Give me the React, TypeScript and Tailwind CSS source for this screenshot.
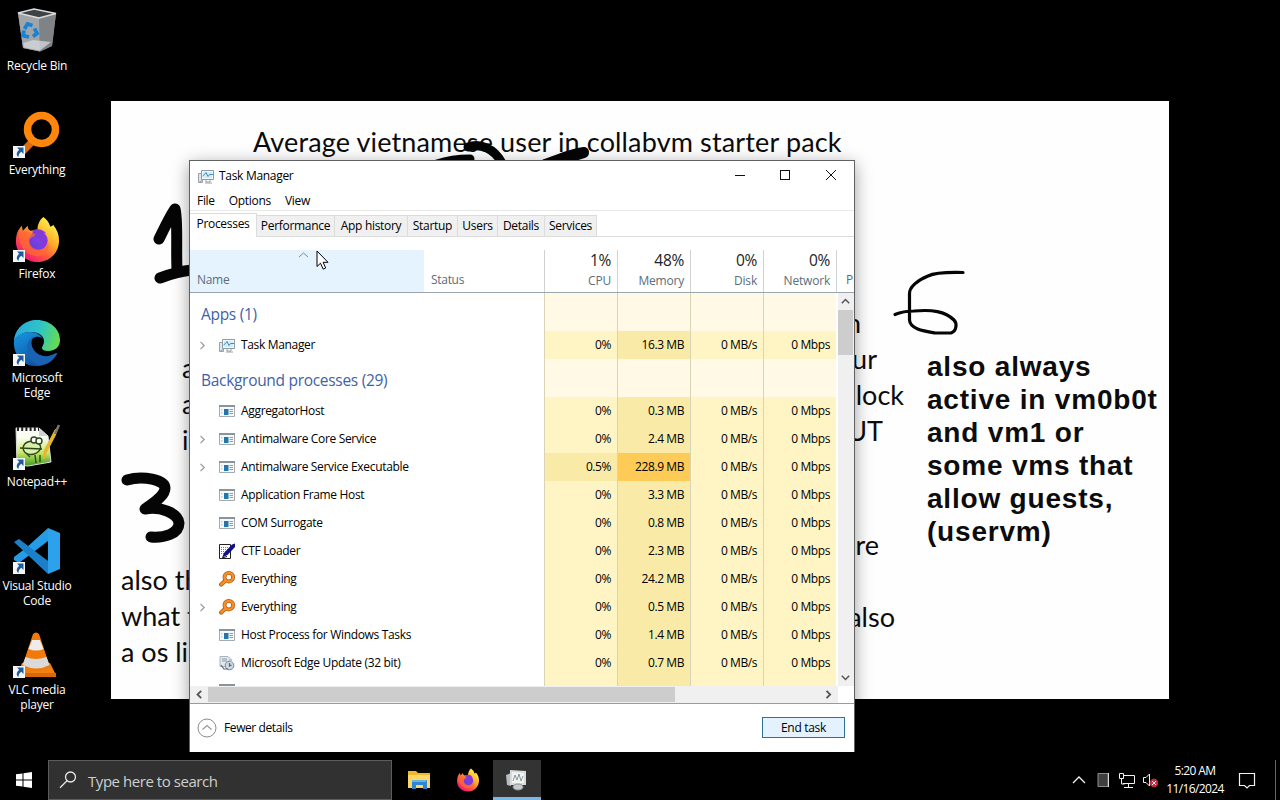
import React from "react";

type Kind = "tm" | "app" | "ctf" | "ev" | "upd";

const rows: { name: string; kind: Kind; exp?: boolean; cpu: string; mem: string }[] = [
  { name: "AggregatorHost", kind: "app", cpu: "0%", mem: "0.3 MB" },
  { name: "Antimalware Core Service", kind: "app", exp: true, cpu: "0%", mem: "2.4 MB" },
  { name: "Antimalware Service Executable", kind: "app", exp: true, cpu: "0.5%", mem: "228.9 MB" },
  { name: "Application Frame Host", kind: "app", cpu: "0%", mem: "3.3 MB" },
  { name: "COM Surrogate", kind: "app", cpu: "0%", mem: "0.8 MB" },
  { name: "CTF Loader", kind: "ctf", cpu: "0%", mem: "2.3 MB" },
  { name: "Everything", kind: "ev", cpu: "0%", mem: "24.2 MB" },
  { name: "Everything", kind: "ev", exp: true, cpu: "0%", mem: "0.5 MB" },
  { name: "Host Process for Windows Tasks", kind: "app", cpu: "0%", mem: "1.4 MB" },
  { name: "Microsoft Edge Update (32 bit)", kind: "upd", cpu: "0%", mem: "0.7 MB" },
];

function TaskIcon() {
  return (
    <svg width="16" height="16" viewBox="0 0 16 16" fill="none" className="shrink-0">
      <path d="M.5 5.500h4v9h-4z" fill="#dfe6ea" stroke="#9aa4aa" />
      <path d="M3.500 2.500h12v9h-12z" fill="#f2f8fb" stroke="#8f9ba2" />
      <path d="M5 4h9v6H5z" fill="#d5ecf7" />
      <path d="M4.500 8l2-1.500 1.500-2 2 4 1.500-2H15" stroke="#3b8fc4" />
      <path d="M8 12v2h4v-2M7 15h7" stroke="#98a2a8" />
      <path d="M1 14.500l3-2" stroke="#6fa7c8" />
    </svg>
  );
}

function RowIcon({ kind }: { kind: Kind }) {
  if (kind === "tm") return <TaskIcon />;
  if (kind === "app")
    return (
      <svg width="16" height="16" viewBox="0 0 16 16" className="shrink-0">
        <path d="M.5 2.500h15v11H.5z" fill="#f6f8f9" stroke="#a3abb0" />
        <path d="M0 2h16v2H0z" fill="#88959c" />
        <path d="M5 6h4.500v6H5z" fill="#1d78ae" />
        <path d="M10.500 6.500H14M10.500 8.500H14M10.500 10.500H14" stroke="#74a9c4" />
        <path d="M2 6h1.500v1.500H2zM2 9h1.500v1.500H2z" fill="#c8d3d8" />
      </svg>
    );
  if (kind === "ctf")
    return (
      <svg width="16" height="16" viewBox="0 0 16 16" className="shrink-0">
        <path d="M.5 1.500h11v14H.5z" fill="#fff" stroke="#222" />
        <path d="M2 4.500h8M2 6.500h7M2 8.500h5M2 10.500h4" stroke="#777" strokeDasharray="1 1" />
        <path d="M3 14.500L5 10 13 1.500l3-1v3.500L8.500 12z" fill="#10108a" />
        <path d="M3 15l5-1.500" stroke="#111" />
      </svg>
    );
  if (kind === "ev")
    return (
      <svg width="16" height="16" viewBox="0 0 16 16" fill="none" className="shrink-0">
        <path d="M6.200 9.800L2.200 13.500" stroke="#b85a10" strokeWidth="4.200" strokeLinecap="round" />
        <circle cx="9.800" cy="6.200" r="4.300" stroke="#b85a10" strokeWidth="3.800" />
        <path d="M6.200 9.800L2.200 13.500" stroke="#f5902a" strokeWidth="2.400" strokeLinecap="round" />
        <circle cx="9.800" cy="6.200" r="4.300" stroke="#f5902a" strokeWidth="2.400" />
      </svg>
    );
  return (
    <svg width="16" height="16" viewBox="0 0 16 16" fill="none" className="shrink-0">
      <path d="M1 1.500h8l2 2v8H1z" fill="#e3e9ee" stroke="#a9b4bd" />
      <path d="M3 4h5M3 6h5" stroke="#8797a5" />
      <circle cx="10.500" cy="10.500" r="4.300" fill="#cdd9e3" stroke="#71869a" />
      <path d="M10.500 8v3l2-1M2 10l3 4h4" stroke="#50677c" strokeWidth="1.200" />
      <path d="M9 5l4-1.500V7" fill="#b9c8d4" />
    </svg>
  );
}

function Chevron({ d, color = "#555", w = 1.5 }: { d: string; color?: string; w?: number }) {
  return (
    <svg width="9" height="9" viewBox="0 0 9 9" fill="none" className="shrink-0">
      <path d={d} stroke={color} strokeWidth={w} />
    </svg>
  );
}
const RIGHT = "M2.500 .8L6.200 4.500 2.500 8.200";
const LEFT = "M6.200 .8L2.500 4.500 6.200 8.200";
const UP = "M.8 6.200L4.500 2.500 8.200 6.200";
const DOWN = "M.8 2.800L4.500 6.500 8.200 2.800";

function FirefoxLogo({ size }: { size: number }) {
  const id = "ff" + size;
  return (
    <svg width={size} height={size} viewBox="0 0 48 48">
      <defs>
        <linearGradient id={id + "a"} x1="0.85" y1="0.1" x2="0.2" y2="0.95">
          <stop offset="0" stopColor="#fff44f" />
          <stop offset=".35" stopColor="#ffb02a" />
          <stop offset=".65" stopColor="#ff5a3a" />
          <stop offset="1" stopColor="#f0127c" />
        </linearGradient>
        <linearGradient id={id + "b"} x1="0" y1="1" x2="1" y2="0">
          <stop offset="0" stopColor="#5b3fd8" />
          <stop offset="1" stopColor="#a03ee8" />
        </linearGradient>
      </defs>
      <path
        d="M30 1c4 3 6 6 7 10 3-1 3-2 3-2 4 5 6 10 6 16 0 13-10 22-22 22S2 38 2 26c0-7 2-12 6-16l1 5 5-5c0 3 1 4 3 5l7-1c0-5 2-10 6-13z"
        fill={`url(#${id}a)`}
      />
      <circle cx="25" cy="25" r="9.500" fill={`url(#${id}b)`} />
      <path d="M19 15c5-3 11-1 14 3l-3-1c5 5 4 13-1 17 1-6-1-10-6-12l-4-3z" fill="#8239d8" />
      <path d="M5 18c4-4 9-3 12-1 1 1 3 1 5 1-1 3-3 3-4 4-2 1-3 2-3 5 0 5 5 8 10 8 5 0 9-3 10-8 2 7-3 14-11 14C14 41 5 33 5 18z" fill="#ff6a35" opacity=".7" />
    </svg>
  );
}

function RecycleBin() {
  return (
    <svg width="48" height="48" viewBox="0 0 48 48">
      <path d="M5 6L21 2l22 4.500L39 39 27 44.500 10 41z" fill="#8d9195" />
      <path d="M5 6l21 5 1 33.500L10 41z" fill="#a2a5a8" />
      <path d="M26 11l17-4.500L39 39l-12 5.500z" fill="#808386" />
      <path d="M5 6L21 2l22 4.500L26 11z" fill="#3f4144" stroke="#d9dcde" strokeWidth="1.300" />
      <path d="M10 36l10-3 18 2-11 8.500-16-3z" fill="#d5dadd" opacity=".75" />
      <g fill="none" stroke="#1683d8" strokeWidth="3.800">
        <path d="M11.500 22l3-5 5 1.500" />
        <path d="M21.500 21.500l2.500 5-4 3" />
        <path d="M16 30l-6-1.500 1-5" />
      </g>
    </svg>
  );
}

function EverythingLogo() {
  return (
    <svg width="48" height="48" viewBox="0 0 48 48" fill="none">
      <path d="M19 31L7 43" stroke="#e06a10" strokeWidth="7" />
      <circle cx="28.500" cy="18.500" r="14" stroke="#ff860d" strokeWidth="7.500" />
    </svg>
  );
}

function EdgeLogo() {
  return (
    <svg width="50" height="50" viewBox="0 0 48 48">
      <defs>
        <linearGradient id="e1" x1="0" y1="0.3" x2="1" y2="0.5">
          <stop offset="0" stopColor="#28a9dc" />
          <stop offset=".55" stopColor="#2fc5c6" />
          <stop offset="1" stopColor="#66dc50" />
        </linearGradient>
        <linearGradient id="e2" x1="0" y1="0" x2=".5" y2="1">
          <stop offset="0" stopColor="#1798e0" />
          <stop offset="1" stopColor="#1056a8" />
        </linearGradient>
      </defs>
      <path d="M1 22C2 9 12 1 24 1c13 0 23 9 23 20 0 7-5 11-12 11-4 0-6-1-6-3 0-2 2-3 2-7 0-5-5-9-13-9C9 13 4 17 1 22z" fill="url(#e1)" />
      <path d="M1 22c3-6 9-9 16-9 8 0 13 5 13 9-1-2-4-3-7-3-5 0-8 5-8 11 0 9 7 15 15 16-3 1-6 1-8 1C10 47 0 36 1 22z" fill="url(#e2)" />
      <path d="M14 30c0-6 2-10 6-12-2 4-2 9 1 13 5 7 14 8 22 3 1 0 1 .5 1 1-5 9-13 12-18 11-7-2-12-8-12-16z" fill="#1a63b4" />
      <path d="M20 19c2-1 5-2 8-.5 2 1 3 3 2 5-1 2-2 3-2 5 1 5 10 5 15 4-7 6-16 5-21-.5-3-3.500-4-9-2-13z" fill="#000" />
    </svg>
  );
}

function NotepadLogo() {
  return (
    <svg width="48" height="48" viewBox="0 0 48 48">
      <defs>
        <linearGradient id="n1" x1="0" y1="0" x2="0" y2="1">
          <stop offset=".25" stopColor="#fbfdf5" />
          <stop offset=".65" stopColor="#c8e865" />
          <stop offset="1" stopColor="#3f9a22" />
        </linearGradient>
      </defs>
      <path d="M3 5h23l9 8 3 26-23 4L4 42z" fill="url(#n1)" stroke="#ddd" />
      <path d="M26 5v8h9z" fill="#cfd3d0" />
      <path d="M4 6h22" stroke="#222" strokeWidth="4" strokeDasharray="2 2.200" />
      <g fill="#d9efab" stroke="#2b4a18" strokeWidth="1.400">
        <path d="M10 25c1-6 7-8 13-6 5 2 6 6 3 9-5 5-15 5-16-3z" />
        <circle cx="21" cy="17" r="3" fill="#fff" />
        <circle cx="26" cy="18" r="3" fill="#fff" />
        <path d="M7 25l22 1M13 30l4 4M22 32l1 8M27 32v7" fill="none" />
      </g>
      <path d="M45 4l-3 9-10 19-1 4v-8L42 7z" fill="#e7b52e" stroke="#e7b52e" />
      <path d="M46 2l-4 9" stroke="#777" strokeWidth="2.500" />
    </svg>
  );
}

function CodeLogo() {
  return (
    <svg width="50" height="50" viewBox="0 0 48 48">
      <path d="M35 1v13L6 36l-5-3v-3l12-9z" fill="#259ce5" />
      <path d="M1 15l5-3 29 22v13z" fill="#1b80c8" />
      <path d="M35 1l12 5v36l-12 5z" fill="#2ca2ed" />
    </svg>
  );
}

function VlcLogo() {
  return (
    <svg width="48" height="48" viewBox="0 0 48 48">
      <path d="M9 32h28l6 12q0 2-2 2H6q-2 0-2-2z" fill="#f08010" />
      <path d="M4 42h39v4H4z" fill="#d96808" />
      <path d="M20 3q3-3 6 0l11 33q-14 8-28 0z" fill="#f27a0c" />
      <path d="M19 9h8l3.500 9q-7 3-15 0z" fill="#ececec" />
      <path d="M12.500 26q10 4 21 0l3 8q-13 7-27 0z" fill="#dadada" />
    </svg>
  );
}

const shortcuts: { label: string; icon: React.ReactNode; link: boolean }[] = [
  { label: "Recycle Bin", icon: <RecycleBin />, link: false },
  { label: "Everything", icon: <EverythingLogo />, link: true },
  { label: "Firefox", icon: <FirefoxLogo size={47} />, link: true },
  { label: "Microsoft Edge", icon: <EdgeLogo />, link: true },
  { label: "Notepad++", icon: <NotepadLogo />, link: true },
  { label: "Visual Studio Code", icon: <CodeLogo />, link: true },
  { label: "VLC media player", icon: <VlcLogo />, link: true },
];

function Shortcut({ label, icon, link }: { label: string; icon: React.ReactNode; link: boolean }) {
  return (
    <div className="flex h-[104px] flex-col items-center pt-[7px]">
      <div className="relative flex h-12 w-12 items-center justify-center">
        {icon}
        {link && (
          <svg width="12" height="12" viewBox="0 0 12 12" className="absolute bottom-[1px] left-0">
            <path d="M0 0h12v12H0z" fill="#f4f6f8" />
            <path d="M4 1.500h6.500V8L8.300 5.800C6.500 7 5.600 8.500 5.500 11 2.800 9 3.500 6 6.200 3.700z" fill="#1f5b9c" />
          </svg>
        )}
      </div>
      <div className="mt-[3px] w-[74px] text-center text-[12px] leading-[15px] tracking-[-0.22px] text-white">{label}</div>
    </div>
  );
}

function Wallpaper() {
  return (
    <div className="absolute left-[111px] top-[101px] h-[598px] w-[1058px] overflow-hidden bg-[#fefefe] font-['Lato',sans-serif] text-[27px] leading-[36px] text-[#0c0c0c]">
      <div className="absolute left-[142px] top-[23px] whitespace-nowrap tracking-[0.14px]">Average vietnamese user in collabvm starter pack</div>
      <div className="absolute left-[71px] top-[249px]">a<br />a<br />is</div>
      <div className="absolute left-[10px] top-[461px] whitespace-nowrap">also the<br />what the<br />a os like</div>
      <div className="absolute right-[308px] top-[204px]">n</div>
      <div className="absolute right-[292px] top-[240px]">ur</div>
      <div className="absolute right-[265px] top-[276px]">block</div>
      <div className="absolute right-[286px] top-[312px]">BUT</div>
      <div className="absolute right-[290px] top-[426px]">re</div>
      <div className="absolute right-[274px] top-[498px]">also</div>
      <div className="absolute left-[816px] top-[249px] whitespace-nowrap font-['Liberation_Sans',sans-serif] text-[28px] font-bold leading-[33px] tracking-[0.8px]">
        also always<br />active in vm0b0t<br />and vm1 or<br />some vms that<br />allow guests,<br />(uservm)
      </div>
      <svg width="1058" height="598" viewBox="111 101 1058 598" fill="none" stroke="#050505" strokeLinecap="round" strokeLinejoin="round" className="absolute left-0 top-0">
        <path d="M159 239C163 231 170 216 175 209C178 220 176 246 177 270M160 278C168 275 180 271 192 270" strokeWidth="11" />
        <path d="M127 480C143 475 165 480 165 488C165 497 151 504 145 509C160 506 178 513 179 523C179 534 164 538 151 537" strokeWidth="11" />
        <path d="M468 147C480 143 494 148 502 163M437 164Q452 159 470 159" strokeWidth="9" />
        <path d="M545 164C560 159 569 154 584 152M562 160L584 153" strokeWidth="10" />
        <path d="M963 272.500C943 272 932 274 928 276C918 280 909 287 909.500 294V320C910 329 923 331 935 333H951C957 331 957 323 954 320C945 311 932 309.500 914 311C906 311 901 312 895 314.500" strokeWidth="3.200" />
      </svg>
    </div>
  );
}

function Cell({ children, tone }: { children?: React.ReactNode; tone: "head" | "low" | "mid" | "hot" }) {
  const bg = { head: "bg-[#fff9e5]", low: "bg-[#fff4c3]", mid: "bg-[#f9eba7]", hot: "bg-[#ffcb57]" }[tone];
  return (
    <div className={`flex w-[73px] shrink-0 items-center justify-end border-l border-[#d9d4b5] pr-[6px] text-[12px] tracking-[-0.42px] ${bg}`}>{children}</div>
  );
}

function Group({ title }: { title: string }) {
  return (
    <div className="flex h-[38px] shrink-0">
      <div className="w-[354px] shrink-0 pl-[11px] pt-[10px] text-[15.5px] leading-[22px] tracking-[-0.3px] text-[#435fa8]">{title}</div>
      <Cell tone="head" /><Cell tone="head" /><Cell tone="head" /><Cell tone="head" />
    </div>
  );
}

function Row({ name, kind, exp, cpu, mem }: { name: string; kind: Kind; exp?: boolean; cpu: string; mem: string }) {
  return (
    <div className="flex h-7 shrink-0">
      <div className="flex w-[354px] shrink-0 items-center pl-2">
        <div className="w-[21px]">{exp && <Chevron d={RIGHT} color="#999" w={1.2} />}</div>
        <RowIcon kind={kind} />
        <span className="ml-[6px] whitespace-nowrap text-[12px] tracking-[-0.33px]">{name}</span>
      </div>
      <Cell tone={cpu === "0%" ? "low" : "mid"}>{cpu}</Cell>
      <Cell tone={mem === "228.9 MB" ? "hot" : "mid"}>{mem}</Cell>
      <Cell tone="low">0 MB/s</Cell>
      <Cell tone="low">0 Mbps</Cell>
    </div>
  );
}

function HeadCell({ top, label }: { top: string; label: string }) {
  return (
    <div className="flex w-[73px] shrink-0 flex-col items-end border-l border-[#cfd3d6] pr-[6px]">
      <span className="mt-[-1px] text-[15.5px] leading-[22px] tracking-[-0.3px] text-[#222]">{top}</span>
      <span className="text-[12px] leading-[19px] tracking-[-0.2px] text-[#5c6d7c]">{label}</span>
    </div>
  );
}

function Tab({ children, className }: { children: string; className: string }) {
  return (
    <div className={`h-[21px] shrink-0 whitespace-nowrap border-r border-t border-[#dcdcdc] bg-[#f0f0f0] text-center leading-[20px] ${className}`}>{children}</div>
  );
}

function TaskManager() {
  return (
    <div className="absolute left-[189px] top-[160px] flex h-[592px] w-[666px] flex-col border border-b-0 border-[#5f6163] bg-white text-[12px] tracking-[-0.3px] text-black shadow-[0_4px_16px_rgba(0,0,0,0.38)]">
      <div className="flex h-[29px] shrink-0 items-center pl-2">
        <TaskIcon />
        <span className="ml-[5px] flex-1">Task Manager</span>
        <svg width="104" height="12" viewBox="0 0 104 12" fill="none" stroke="#111" className="mb-[2px] mr-[16px]" shapeRendering="crispEdges">
          <path d="M1 6.500h10M46.500 1.500h9v9h-9z" />
          <path d="M92 1l10 10M102 1L92 11" shapeRendering="auto" />
        </svg>
      </div>
      <div className="flex h-[21px] shrink-0 items-center gap-[14px] border-b border-[#e8e8e8] pl-[7px] pt-[2px]">
        <span>File</span>
        <span>Options</span>
        <span>View</span>
      </div>
      <div className="flex h-[26px] shrink-0 items-end border-b border-[#dcdcdc]">
        <div className="z-10 mb-[-1px] h-[24px] w-[67px] shrink-0 border-r border-t border-[#dcdcdc] bg-white text-center leading-[20px]">Processes</div>
        <Tab className="w-[78px]">Performance</Tab>
        <Tab className="w-[73px]">App history</Tab>
        <Tab className="w-[50px]">Startup</Tab>
        <Tab className="w-[40px]">Users</Tab>
        <Tab className="w-[47px]">Details</Tab>
        <Tab className="w-[52px]">Services</Tab>
      </div>
      <div className="mt-[13px] flex h-[43px] shrink-0 overflow-hidden border-b border-[#9aa5ae]">
        <div className="relative flex w-[234px] shrink-0 items-end bg-[#e4f3fe] pb-[3px] pl-[7px] text-[#5c6d7c]">
          Name
          <svg width="11" height="6" viewBox="0 0 11 6" fill="none" className="absolute left-[108px] top-[2px]">
            <path d="M1 5l4.500-4L10 5" stroke="#7b8994" />
          </svg>
        </div>
        <div className="flex w-[120px] shrink-0 items-end pb-[3px] pl-[7px] text-[#5c6d7c]">Status</div>
        <HeadCell top="1%" label="CPU" />
        <HeadCell top="48%" label="Memory" />
        <HeadCell top="0%" label="Disk" />
        <HeadCell top="0%" label="Network" />
        <div className="flex flex-1 items-end overflow-hidden border-l border-[#cfd3d6] pb-[3px] pl-[9px] text-[#5c6d7c]">P</div>
      </div>
      <div className="flex h-[393px] shrink-0">
        <div className="flex w-[646px] shrink-0 flex-col overflow-hidden">
          <Group title="Apps (1)" />
          <Row name="Task Manager" kind="tm" exp cpu="0%" mem="16.3 MB" />
          <Group title="Background processes (29)" />
          {rows.map((r, i) => (
            <Row key={i} {...r} />
          ))}
          <div className="flex h-[9px] shrink-0">
            <div className="w-[354px] shrink-0 pl-[29px] pt-[7px]">
              <div className="h-[2px] w-4 bg-[#88959c]" />
            </div>
            <Cell tone="low" /><Cell tone="mid" /><Cell tone="low" /><Cell tone="low" />
          </div>
        </div>
        <div className="ml-[2px] flex flex-1 flex-col items-center bg-[#f0f0f0] pr-px">
          <div className="flex h-[17px] items-center"><Chevron d={UP} /></div>
          <div className="h-[45px] w-full bg-[#cdcdcd]" />
          <div className="mt-auto flex h-[17px] items-center"><Chevron d={DOWN} /></div>
        </div>
      </div>
      <div className="flex h-[18px] shrink-0 border-b border-[#9b9b9b]">
        <div className="flex w-[648px] items-center bg-[#f0f0f0]">
          <div className="flex w-[18px] justify-center"><Chevron d={LEFT} w={1.8} /></div>
          <div className="h-[15px] w-[467px] bg-[#cdcdcd]" />
          <div className="ml-auto mr-[5px]"><Chevron d={RIGHT} w={1.8} /></div>
        </div>
      </div>
      <div className="flex flex-1 items-center pb-px pl-[7px] pr-[9px]">
        <svg width="20" height="20" viewBox="0 0 20 20" fill="none" stroke="#8b8b8b">
          <circle cx="10" cy="10" r="9" />
          <path d="M5.500 11.500L10 7.500l4.500 4" stroke="#9a9a9a" strokeWidth="1.300" />
        </svg>
        <span className="ml-[7px] tracking-[-0.4px]">Fewer details</span>
        <button className="mb-px ml-auto h-[21px] w-[83px] border border-[#2f7195] bg-[#e3f2fd] leading-[19px]">End task</button>
      </div>
    </div>
  );
}

function Taskbar() {
  return (
    <div className="absolute bottom-0 left-0 flex h-10 w-full items-center bg-black text-white">
      <div className="flex w-12 justify-center">
        <svg width="16" height="16" viewBox="0 0 16 16" fill="#fff">
          <path d="M0 2.300L6.500 1.400v6.100H0zM7.500 1.200L16 0v7.500H7.500zM0 8.500h6.500v6.100L0 13.700zM7.500 8.500H16V16l-8.500-1.200z" />
        </svg>
      </div>
      <div className="flex h-10 w-[344px] items-center border border-[#5c5c5c] bg-[#313131] pl-[10px]">
        <svg width="18" height="18" viewBox="0 0 18 18" fill="none" stroke="#e8e8e8" strokeWidth="1.300">
          <circle cx="11.500" cy="6" r="5" />
          <path d="M8 9.700L1 16.700" />
        </svg>
        <span className="ml-[11px] mt-[2px] text-[15px] tracking-[-0.45px] text-[#cfcfcf]">Type here to search</span>
      </div>
      <div className="ml-[3px] flex h-10 w-12 items-center justify-center">
        <svg width="22" height="20" viewBox="0 0 22 20">
          <path d="M0 1h8l2 2h12v15H0z" fill="#eeb72c" />
          <path d="M0 5h22v13H0z" fill="#fcd765" />
          <path d="M4 10h14q1 0 1 1v8h-4v-4H8v4H4z" fill="#2d86cf" />
          <path d="M4 10h14v2H4z" fill="#65b5e8" />
        </svg>
      </div>
      <div className="flex h-10 w-[50px] items-center justify-center">
        <FirefoxLogo size={24} />
      </div>
      <div className="flex h-10 w-12 items-center justify-center border-b-[3px] border-[#79b7e6] bg-[#333]">
        <svg width="24" height="22" viewBox="0 0 24 22" className="mt-[2px]">
          <path d="M1 6l5-2v13l-4-1z" fill="#b9bdbf" />
          <path d="M5 1l16 1v14H5z" fill="#d8dbdc" />
          <path d="M7 3l12 1v10H7z" fill="#f1f3f3" />
          <path d="M8 12l2-6 2 5 2-6 2 7 2-5" fill="none" stroke="#8b989e" />
          <ellipse cx="13" cy="18" rx="5" ry="3" fill="#c7cbcd" stroke="#8f9699" />
        </svg>
      </div>
      <div className="ml-auto flex items-center">
        <svg width="86" height="20" viewBox="1072 770 86 20" fill="none" stroke="#f2f2f2">
          <path d="M1073 783l6-6 6 6" strokeWidth="1.300" />
          <path d="M1098 773.500h10v13h-10z" fill="#3f3f3f" stroke="#8d8d8d" />
          <path d="M1108.500 773v14" stroke="#ddd" />
          <path d="M1123 775.500h11.500v8H1123M1128.500 784v3M1124 787.500h9M1119.500 773.500h4v5h-4zM1121.500 779v5h3" />
          <path d="M1143.500 777.500h2.500l3.500-3.500v12l-3.500-3.500h-2.500z" />
          <circle cx="1154" cy="783" r="4.300" fill="#c72a3d" stroke="none" />
          <path d="M1152 781l4 4M1156 781l-4 4" />
        </svg>
        <div className="ml-[6px] w-[62px] text-center text-[12px] leading-[18px] tracking-[-0.6px]">
          5:20 AM<br />11/16/2024
        </div>
        <svg width="18" height="18" viewBox="0 0 18 18" fill="none" stroke="#f2f2f2" strokeWidth="1.200" className="ml-[12px]">
          <path d="M1.500 2.500h15v12h-5L9 17l-2.500-2.500h-5z" />
        </svg>
        <div className="ml-[19px] h-10 border-l border-[#666] pl-[4px]" />
      </div>
    </div>
  );
}

export default function App() {
  return (
    <div className="relative h-[800px] w-[1280px] overflow-hidden bg-black font-['Open_Sans','Noto_Sans',sans-serif]">
      <Wallpaper />
      <div className="flex w-[74px] flex-col">
        {shortcuts.map((s) => (
          <Shortcut key={s.label} {...s} />
        ))}
      </div>
      <TaskManager />
      <svg width="14" height="21" viewBox="0 0 14 21" className="absolute left-[316px] top-[250px]">
        <path d="M1 1v15.500l3.500-3.300 2.700 6 2.500-1.200-2.600-5.700H12z" fill="#fff" stroke="#000" />
      </svg>
      <Taskbar />
    </div>
  );
}
